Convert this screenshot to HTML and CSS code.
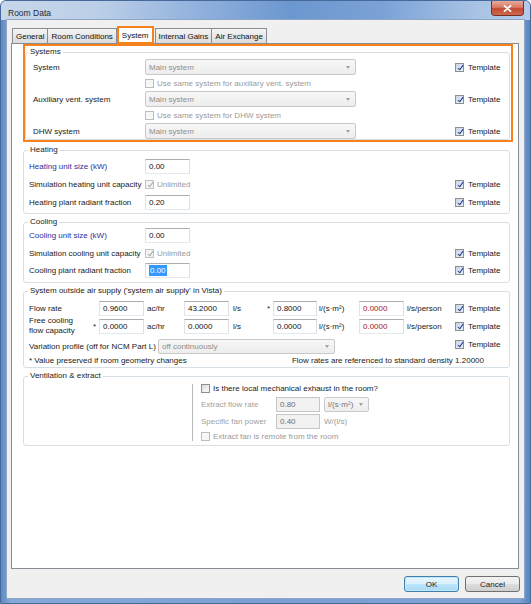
FILE: index.html
```html
<!DOCTYPE html>
<html lang="en">
<head>
  <meta charset="UTF-8">
  <meta name="viewport" content="width=device-width, initial-scale=1.0">
  <title>Room Data</title>
  <link rel="stylesheet" href="styles.css">
</head>
<body>
  <div class="window">
    <div class="titlebar">
      <span class="title">Room Data</span>
      <button class="close-btn" title="Close">
        <svg width="9" height="7" viewBox="0 0 9 7"><path d="M1.5 0.8 L7.5 6.2 M7.5 0.8 L1.5 6.2" stroke="#fff" stroke-width="1.8" stroke-linecap="round"/></svg>
      </button>
    </div>

    <div class="client">
      <ul class="tabs">
        <li class="tab">General</li>
        <li class="tab">Room Conditions</li>
        <li class="tab active">System</li>
        <li class="tab">Internal Gains</li>
        <li class="tab">Air Exchange</li>
      </ul>

      <div class="panel">
        <!-- Systems -->
        <div class="highlight">
          <fieldset class="group systems">
            <legend>Systems</legend>
            <div class="row">
              <span class="label">System</span>
              <span class="combo sys-combo">Main system</span>
              <span class="template"><span class="cb on"></span>Template</span>
            </div>
            <div class="row">
              <span class="label"></span>
              <span class="check muted"><span class="cb off"></span>Use same system for auxiliary vent. system</span>
            </div>
            <div class="row">
              <span class="label">Auxiliary vent. system</span>
              <span class="combo sys-combo">Main system</span>
              <span class="template"><span class="cb on"></span>Template</span>
            </div>
            <div class="row">
              <span class="label"></span>
              <span class="check muted"><span class="cb off"></span>Use same system for DHW system</span>
            </div>
            <div class="row">
              <span class="label">DHW system</span>
              <span class="combo sys-combo">Main system</span>
              <span class="template"><span class="cb on"></span>Template</span>
            </div>
          </fieldset>
        </div>

        <!-- Heating -->
        <fieldset class="group heating">
          <legend>Heating</legend>
          <div class="row tall">
            <span class="label blue">Heating unit size (kW)</span>
            <span class="field">0.00</span>
          </div>
          <div class="row tall">
            <span class="label">Simulation heating unit capacity</span>
            <span class="check muted"><span class="cb on dim"></span>Unlimited</span>
            <span class="template"><span class="cb on"></span>Template</span>
          </div>
          <div class="row tall">
            <span class="label">Heating plant radiant fraction</span>
            <span class="field">0.20</span>
            <span class="template"><span class="cb on"></span>Template</span>
          </div>
        </fieldset>

        <!-- Cooling -->
        <fieldset class="group cooling">
          <legend>Cooling</legend>
          <div class="row r17">
            <span class="label blue">Cooling unit size (kW)</span>
            <span class="field">0.00</span>
          </div>
          <div class="row r18">
            <span class="label">Simulation cooling unit capacity</span>
            <span class="check muted"><span class="cb on dim"></span>Unlimited</span>
            <span class="template"><span class="cb on"></span>Template</span>
          </div>
          <div class="row r17">
            <span class="label">Cooling plant radiant fraction</span>
            <span class="field"><span class="selected">0.00</span></span>
            <span class="template"><span class="cb on"></span>Template</span>
          </div>
        </fieldset>

        <!-- Outside air -->
        <fieldset class="group air">
          <legend>System outside air supply ('system air supply' in Vista)</legend>
          <div class="row r17">
            <span class="air-label">Flow rate</span>
            <span class="star"></span>
            <span class="field">0.9600</span>
            <span class="unit u-ach">ac/hr</span>
            <span class="field">43.2000</span>
            <span class="unit u-ls">l/s</span>
            <span class="star">*</span>
            <span class="field w44">0.8000</span>
            <span class="unit u-lsm">l/(s·m²)</span>
            <span class="field red">0.0000</span>
            <span class="unit u-lsp">l/s/person</span>
            <span class="template"><span class="cb on"></span>Template</span>
          </div>
          <div class="row r18">
            <span class="air-label two-line">Free cooling<br>flow capacity</span>
            <span class="star">*</span>
            <span class="field">0.0000</span>
            <span class="unit u-ach">ac/hr</span>
            <span class="field">0.0000</span>
            <span class="unit u-ls">l/s</span>
            <span class="star"></span>
            <span class="field w44">0.0000</span>
            <span class="unit u-lsm">l/(s·m²)</span>
            <span class="field red">0.0000</span>
            <span class="unit u-lsp">l/s/person</span>
            <span class="template"><span class="cb on"></span>Template</span>
          </div>
          <div class="row r17 profile-row">
            <span class="profile-label">Variation profile (off for NCM Part L)</span>
            <span class="combo profile-combo">off continuously</span>
            <span class="template up"><span class="cb on"></span>Template</span>
          </div>
          <div class="note-row">
            <span>* Value preserved if room geometry changes</span>
            <span class="density">Flow rates are referenced to standard density 1.20000</span>
          </div>
        </fieldset>

        <!-- Ventilation -->
        <fieldset class="group vent">
          <legend>Ventilation &amp; extract</legend>
          <div class="vent-body">
            <div class="vent-spacer"></div>
            <div class="vent-fields">
              <div class="row v15">
                <span class="check"><span class="cb off"></span>Is there local mechanical exhaust in the room?</span>
              </div>
              <div class="row v17">
                <span class="vent-label">Extract flow rate</span>
                <span class="field disabled w44">0.80</span>
                <span class="combo unit-combo">l/(s·m²)</span>
              </div>
              <div class="row v16">
                <span class="vent-label">Specific fan power</span>
                <span class="field disabled w44">0.40</span>
                <span class="unit muted after-field">W/(l/s)</span>
              </div>
              <div class="row v14">
                <span class="check muted"><span class="cb off dim"></span>Extract fan is remote from the room</span>
              </div>
            </div>
          </div>
        </fieldset>
      </div>

      <div class="buttons">
        <button class="btn default">OK</button>
        <button class="btn">Cancel</button>
      </div>
    </div>
  </div>
</body>
</html>
```

FILE: styles.css
```css
* {
  box-sizing: border-box;
}

body {
  margin: 0;
  font-family: "Liberation Sans", Arial, sans-serif;
  font-size: 8px;
  color: #1a1a1a;
  background: #fff;
}

.window {
  width: 531px;
  height: 604px;
  display: flex;
  flex-direction: column;
  background: linear-gradient(90deg, #5f8bc6 0%, #86a9d8 2%, #7aa0d3 50%, #7ea3d5 98%, #5683bf 100%);
  border: 1px solid #46699a;
  border-radius: 6px 6px 0 0;
  overflow: hidden;
}

/* title bar */
.titlebar {
  height: 19px;
  display: flex;
  align-items: flex-start;
  background: linear-gradient(90deg, #c7d7ea 0%, #bccfe8 18%, #8fb0dc 38%, #6b97d0 55%, #7ba2d6 72%, #a9c3e5 90%, #b4cbe8 100%);
}

.title {
  font-size: 8.5px;
  color: #1e2a3a;
  padding: 7px 0 0 7px;
}

.close-btn {
  margin-left: auto;
  margin-right: 6px;
  width: 33px;
  height: 15px;
  padding: 0;
  border: 1px solid #7b2f22;
  border-top: none;
  border-radius: 0 0 4px 4px;
  background: linear-gradient(#e9a99a 0%, #d77a65 45%, #c14a30 55%, #cd6a50 100%);
  display: flex;
  align-items: center;
  justify-content: center;
}

/* client area */
.client {
  flex: 1;
  margin: 0 6px 5px 6px;
  background: #f0f0f0;
  box-shadow: 0 0 0 1px #8ea6c6;
  padding: 6px 4px 6px 4px;
  display: flex;
  flex-direction: column;
}

.tabs {
  list-style: none;
  margin: 0 0 0 1px;
  padding: 0;
  height: 17px;
  display: flex;
  align-items: flex-end;
}

.tab {
  height: 15px;
  padding: 0 3px;
  margin-right: -1px;
  border: 1px solid #898c95;
  border-bottom: none;
  background: linear-gradient(#f4f4f4, #e8e8e8 50%, #dcdcdc);
  display: flex;
  align-items: center;
  color: #111;
}

.tab.active {
  height: 18px;
  margin: 0 1px -1px 1px;
  padding: 0 3px;
  border: 2px solid #f5821f;
  background: #fff;
  position: relative;
  z-index: 1;
}

.panel {
  flex: 1;
  margin-right: 1px;
  background: #fff;
  border: 1px solid #898c95;
}

/* orange frame round the Systems box */
.highlight {
  margin: 0 5px 0 11px;
  border: 2px solid #f5821f;
}

.group {
  border: 1px solid #d5dfe5;
  border-radius: 3px;
  margin: 3px 8px 0 11px;
  padding: 0 4px 0 5px;
  min-width: 0;
}

.group legend {
  padding: 0 2px;
  margin-left: -1px;
  line-height: 10px;
  color: #1a1a1a;
}

.group.systems {
  margin: 1px 1px 0 0;
  padding: 2px 4px 0 7px;
}

.group.systems legend {
  margin-left: -5px;
}

.group.heating {
  padding-top: 2px;
  padding-bottom: 2px;
}

.group.cooling {
  padding-bottom: 3px;
}

.group.air {
  padding-top: 4px;
  padding-bottom: 1px;
}

.group.vent {
  padding-bottom: 2px;
}

.row {
  height: 16px;
  display: flex;
  align-items: center;
  white-space: nowrap;
}

.row.tall { height: 18px; }
.row.r17 { height: 17px; }
.row.r18 { height: 18px; }
.row.v14 { height: 14px; }
.row.v15 { height: 15px; }
.row.v16 { height: 16px; }
.row.v17 { height: 17px; }

.label {
  width: 116px;
  flex: none;
}

.systems .label {
  width: 112px;
}

.blue {
  color: #2b2f9c;
}

.muted {
  color: #9a9a9a;
}

/* checkboxes */
.check {
  display: flex;
  align-items: center;
  gap: 3px;
}

.cb {
  width: 9px;
  height: 9px;
  flex: none;
  border: 1px solid #8e8f8f;
  background: linear-gradient(135deg, #dcdcdc, #fbfbfb);
  position: relative;
}

.cb.on {
  background: linear-gradient(135deg, #c8d4e6, #eef2f8);
}

.cb.on::after {
  content: "";
  position: absolute;
  left: 2.5px;
  top: 0;
  width: 2px;
  height: 5px;
  border-right: 1.5px solid #1f3a93;
  border-bottom: 1.5px solid #1f3a93;
  transform: rotate(35deg);
}

.cb.dim {
  border-color: #c2c2c2;
  background: #f4f4f4;
}

.cb.dim::after {
  border-color: #a8a8a8;
}

.muted .cb.off {
  border-color: #bdbdbd;
  background: #f6f6f6;
}

.template {
  margin-left: auto;
  width: 50px;
  flex: none;
  display: flex;
  align-items: center;
  gap: 4px;
  color: #1a1a1a;
}

.template.up {
  align-self: flex-start;
  padding-top: 2px;
}

/* combo boxes (all read-only here) */
.combo {
  height: 16px;
  flex: none;
  border: 1px solid #c9c9c9;
  border-radius: 2px;
  background: linear-gradient(#f7f7f7, #ededed);
  color: #8d8d8d;
  padding-left: 3px;
  display: flex;
  align-items: center;
}

.combo::after {
  content: "";
  margin-left: auto;
  margin-right: 5px;
  border-left: 2.5px solid transparent;
  border-right: 2.5px solid transparent;
  border-top: 3px solid #a0a0a0;
}

.sys-combo {
  width: 211px;
}

.profile-combo {
  width: 177px;
  height: 15px;
}

.unit-combo {
  width: 45px;
  height: 15px;
  margin-left: 4px;
  color: #777;
}

/* text boxes */
.field {
  width: 45px;
  height: 15px;
  flex: none;
  border: 1px solid;
  border-color: #abadb3 #dbdfe6 #e3e9ef #e2e3ea;
  background: #fff;
  padding-left: 3px;
  display: flex;
  align-items: center;
  color: #111;
}

.field.w44 {
  width: 44px;
}

.field.red {
  color: #a3141b;
}

.field.disabled {
  background: #f2f2f2;
  border-color: #c6c6c6;
  color: #6e6e6e;
}

.selected {
  background: #3399ff;
  color: #fff;
  padding: 0 1px;
  line-height: 11px;
}

/* outside air grid */
.air-label {
  width: 61px;
  flex: none;
}

.air-label.two-line {
  line-height: 10px;
  white-space: normal;
}

.star {
  width: 9px;
  flex: none;
  text-align: center;
}

.unit {
  flex: none;
}

.u-ach { width: 40px; padding-left: 3px; }
.u-ls  { width: 35px; padding-left: 4px; }
.u-lsm { width: 42px; padding-left: 2px; }
.u-lsp { width: 51px; padding-left: 3px; }

.profile-row {
  margin-top: 3px;
}

.profile-label {
  width: 129px;
  flex: none;
}

.note-row {
  height: 11px;
  display: flex;
  align-items: center;
  white-space: nowrap;
}

.density {
  margin-left: auto;
  margin-right: 21px;
}

/* ventilation */
.vent-body {
  display: flex;
}

.vent-spacer {
  width: 164px;
  flex: none;
  margin: 3px 0 2px;
  border-right: 1px solid #b8b8b8;
}

.vent-fields {
  padding-left: 8px;
}

.vent-label {
  width: 75px;
  flex: none;
  color: #a0a0a0;
}

.after-field {
  margin-left: 4px;
}

/* dialog buttons */
.buttons {
  margin-top: 7px;
  height: 16px;
  display: flex;
  justify-content: flex-end;
  gap: 6px;
}

.btn {
  width: 55px;
  height: 16px;
  padding: 0;
  font-family: inherit;
  font-size: 8px;
  color: #1a1a1a;
  border: 1px solid #707070;
  border-radius: 3px;
  background: linear-gradient(#f2f2f2 0%, #ebebeb 50%, #dddddd 51%, #cfcfcf 100%);
}

.btn.default {
  border-color: #3c7fb1;
  background: linear-gradient(#eaf6fd 0%, #d9f0fc 50%, #bee6fd 51%, #a7d9f5 100%);
  box-shadow: inset 0 0 0 1px #c5e9fb;
}
```
